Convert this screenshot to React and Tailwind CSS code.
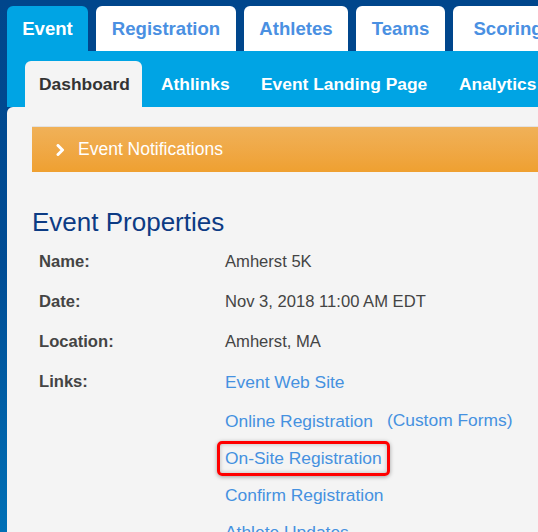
const topTabs = [
  { label: "Event", w: "w-[81px]", active: true },
  { label: "Registration", w: "w-[140px]" },
  { label: "Athletes", w: "w-[104px]" },
  { label: "Teams", w: "w-[89px]" },
  { label: "Scoring", w: "w-[110px]" },
];

const subTabs = [
  { label: "Dashboard", w: "w-[117px]", active: true },
  { label: "Athlinks", w: "w-[95px]" },
  { label: "Event Landing Page", w: "w-[193px]" },
  { label: "Analytics", w: "w-[110px]" },
];

const props = [
  { label: "Name:", value: "Amherst 5K" },
  { label: "Date:", value: "Nov 3, 2018 11:00 AM EDT" },
  { label: "Location:", value: "Amherst, MA" },
];

const links = [
  { text: "Event Web Site" },
  { text: "Online Registration", extra: "(Custom Forms)" },
  { text: "On-Site Registration", highlight: true },
  { text: "Confirm Registration" },
  { text: "Athlete Updates" },
];

const ChevronRight = () => (
  <svg width="9" height="12" viewBox="0 0 9 12" className="shrink-0">
    <polyline points="2,1.5 6.5,6 2,10.5" fill="none" stroke="white" strokeWidth="3" strokeLinecap="round" strokeLinejoin="round" />
  </svg>
);

export default function App() {
  return (
    <div className="flex h-screen w-full overflow-hidden bg-[#00468c] font-['Liberation_Sans',Arial,sans-serif]">
      {/* left strip */}
      <div className="w-[7px] shrink-0 bg-gradient-to-b from-[#00468c] via-[#004c94] to-[#0070b6]" />

      <div className="flex min-w-0 flex-1 flex-col">
        {/* Top tabs */}
        <div className="flex shrink-0 items-end gap-[8px] overflow-hidden pt-[6px]">
          {topTabs.map((t) => (
            <div
              key={t.label}
              className={`flex h-[45px] shrink-0 items-center justify-center whitespace-nowrap rounded-t-[6px] text-[18.6px] font-bold ${t.w} ${
                t.active ? "bg-[#00a4e4] text-white" : "bg-white text-[#4a90e2]"
              }`}
            >
              {t.label}
            </div>
          ))}
        </div>

        {/* Sub tabs */}
        <div className="flex h-[56px] shrink-0 items-end gap-[5px] overflow-hidden bg-[#00a4e4] pl-[18px]">
          {subTabs.map((t) => (
            <div
              key={t.label}
              className={`flex h-[46px] shrink-0 items-center whitespace-nowrap rounded-t-[6px] px-[14px] text-[17.4px] font-bold ${t.w} ${
                t.active ? "bg-[#f4f4f4] text-[#333]" : "text-white"
              }`}
            >
              {t.label}
            </div>
          ))}
        </div>

        {/* Content */}
        <div className="flex-1 rounded-tl-[6px] bg-[#f4f4f4] pl-[25px] pt-[19px]">
          <div className="flex h-[46px] items-center gap-[13px] border-t border-[#e2e2e2] bg-gradient-to-b from-[#f0b158] to-[#efa030] pl-[24px] text-[17.5px] text-white">
            <ChevronRight />
            <span>Event Notifications</span>
          </div>

          <h2 className="mt-[35px] h-[30px] text-[26px] leading-[30px] text-[#0c3b84]">Event Properties</h2>

          <div className="mt-[5px] pl-[7px] text-[16.6px] text-[#444]">
            {props.map((p) => (
              <div key={p.label} className="flex h-[40px] items-center">
                <div className="w-[186px] font-bold">{p.label}</div>
                <div>{p.value}</div>
              </div>
            ))}
            <div className="flex">
              <div className="flex h-[40px] w-[186px] items-center font-bold">Links:</div>
              <div className="flex flex-col text-[17.4px]">
                {links.map((l, i) => (
                  <div key={l.text} className={`flex items-center whitespace-nowrap text-[#4591e0] ${i === 0 ? "h-[40px]" : "h-[37px]"}`}>
                    <span className="relative inline-block leading-[18px]">
                      {l.highlight && (
                        <span className="absolute -bottom-[9px] -left-[8px] -right-[8px] -top-[8px] rounded-[5px] border-[3px] border-[#f00] shadow-[0_1px_4px_rgba(0,0,0,0.35),inset_0_0_4px_rgba(0,0,0,0.25)]" />
                      )}
                      {l.text}
                    </span>
                    {l.extra && <span className="ml-[14px]">{l.extra}</span>}
                  </div>
                ))}
              </div>
            </div>
          </div>
        </div>
      </div>
    </div>
  );
}
